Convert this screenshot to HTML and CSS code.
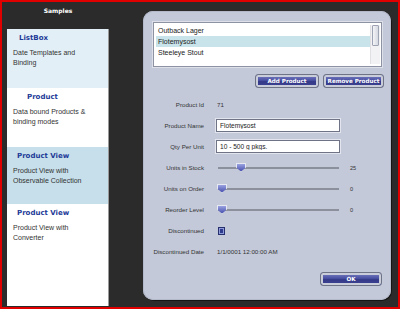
FILE: index.html
```html
<!DOCTYPE html>
<html lang="en">
<head>
    <meta charset="UTF-8">
    <title>Samples</title>
    <link rel="stylesheet" href="styles.css">
</head>
<body>
    <div class="frame">
        <div class="side">
            <div class="side-title">Samples</div>
            <div class="sample-list">
                <div class="sample sample-tinted">
                    <div class="sample-name name-listbox">ListBox</div>
                    <div class="sample-desc">Date Templates and Binding</div>
                </div>
                <div class="sample">
                    <div class="sample-name name-product">Product</div>
                    <div class="sample-desc">Data bound Products &amp; binding modes</div>
                </div>
                <div class="sample sample-selected">
                    <div class="sample-name">Product View</div>
                    <div class="sample-desc">Product View with Observable Collection</div>
                </div>
                <div class="sample sample-last">
                    <div class="sample-name">Product View</div>
                    <div class="sample-desc">Product View with Converter</div>
                </div>
            </div>
        </div>

        <div class="panel">
            <div class="listbox">
                <div class="list-items">
                    <div class="list-item">Outback Lager</div>
                    <div class="list-item selected">Flotemysost</div>
                    <div class="list-item">Steeleye Stout</div>
                </div>
                <div class="scrollbar"><div class="scroll-thumb"></div></div>
            </div>

            <div class="actions">
                <button class="btn btn-add">Add Product</button>
                <button class="btn btn-remove">Remove Product</button>
            </div>

            <div class="form">
                <div class="label">Product Id</div>
                <div class="value">71</div>

                <div class="label">Product Name</div>
                <div class="value"><input class="field" type="text" value="Flotemysost"></div>

                <div class="label">Qty Per Unit</div>
                <div class="value"><input class="field" type="text" value="10 - 500 g pkgs."></div>

                <div class="label">Units in Stock</div>
                <div class="value slider-row">
                    <div class="track"><span class="thumb" style="left: 18px"></span></div>
                    <span class="slider-value">25</span>
                </div>

                <div class="label">Units on Order</div>
                <div class="value slider-row">
                    <div class="track"><span class="thumb" style="left: -1px"></span></div>
                    <span class="slider-value">0</span>
                </div>

                <div class="label">Reorder Level</div>
                <div class="value slider-row">
                    <div class="track"><span class="thumb" style="left: -1px"></span></div>
                    <span class="slider-value">0</span>
                </div>

                <div class="label">Discontinued</div>
                <div class="value"><span class="check"></span></div>

                <div class="label">Discontinued Date</div>
                <div class="value">1/1/0001 12:00:00 AM</div>
            </div>

            <div class="footer">
                <button class="btn btn-ok">OK</button>
            </div>
        </div>
    </div>
</body>
</html>
```

FILE: styles.css
```css
* {
    box-sizing: border-box;
    margin: 0;
    padding: 0;
}

body {
    background: #2b2b2b;
    font-family: 'Liberation Sans', Arial, sans-serif;
    color: #333;
}

.frame {
    width: 400px;
    height: 309px;
    border: 2px solid #e00000;
    background: #2b2b2b;
    display: flex;
    padding-left: 5px;
}

/* sidebar */
.side {
    width: 102px;
    display: flex;
    flex-direction: column;
}

.side-title {
    height: 27px;
    line-height: 17px;
    text-align: center;
    color: #fff;
    font-family: 'DejaVu Sans', Verdana, sans-serif;
    font-weight: bold;
    font-size: 6px;
}

.sample-list {
    flex: 1;
    background: #fff;
    border-right: 1px solid #9a9a9a;
    margin-bottom: 1px;
    display: flex;
    flex-direction: column;
}

.sample {
    height: 59px;
    padding: 5px 6px 0;
}

.sample-tinted {
    background: #e3eff6;
}

.sample-selected {
    height: 57px;
    background: #c6dfea;
}

.sample-last {
    flex: 1;
}

.sample-name {
    font-family: 'DejaVu Sans', Verdana, sans-serif;
    font-weight: bold;
    font-size: 7px;
    color: #1d3a98;
    height: 14px;
    line-height: 9px;
    padding-left: 4px;
}

.name-listbox {
    padding-left: 6px;
}

.name-product {
    padding-left: 14px;
}

.sample-desc {
    max-width: 82px;
    font-size: 7px;
    line-height: 9.5px;
    color: #333;
}

/* main panel */
.panel {
    width: 248px;
    height: 289px;
    margin: 9px 0 0 34px;
    background: #c3c9d9;
    border-radius: 10px;
    box-shadow: 1px 1px 0 #151515, inset 0 0 0 1px #b3b9c9;
    padding: 11px 7px 0 10px;
    display: flex;
    flex-direction: column;
}

.listbox {
    width: 229px;
    height: 45px;
    background: #fff;
    border: 1px solid #8e93a3;
    box-shadow: 0 0 0 1px #dde0e8;
    display: flex;
    padding: 2px 1px 2px 2px;
}

.list-items {
    flex: 1;
}

.list-item {
    height: 11px;
    line-height: 12px;
    font-size: 7px;
    padding-left: 2px;
    color: #222;
}

.list-item.selected {
    background: #c8e4ea;
}

.scrollbar {
    width: 10px;
    background: #f2f2f4;
    border-left: 1px solid #e0e0e4;
}

.scroll-thumb {
    height: 21px;
    margin: 0 1px;
    background: linear-gradient(90deg, #f4f4f7, #d7d9e2);
    border: 1px solid #9ea3b4;
    border-radius: 1px;
}

.actions {
    display: flex;
    justify-content: flex-end;
    gap: 4px;
    margin-top: 7px;
}

.btn {
    height: 14px;
    border: 1px solid #6e7386;
    border-radius: 3px;
    background: linear-gradient(#7a80c4, #4a50a2 45%, #343a88 55%, #3e4494);
    box-shadow: inset 0 0 0 2px #c9cdda;
    color: #fff;
    font-family: 'DejaVu Sans', Verdana, sans-serif;
    font-weight: bold;
    font-size: 5.6px;
    line-height: 12px;
}

.btn-add {
    width: 64px;
}

.btn-remove {
    width: 61px;
}

.btn-ok {
    width: 62px;
}

/* details form */
.form {
    display: grid;
    grid-template-columns: 51px 1fr;
    grid-auto-rows: 21px;
    column-gap: 13px;
    margin-top: 6px;
    font-size: 6.2px;
    color: #333;
}

.label {
    text-align: right;
    align-self: center;
}

.value {
    align-self: center;
    display: flex;
    align-items: center;
}

.field {
    width: 124px;
    height: 13px;
    margin-left: -1px;
    border: 1px solid #6e7386;
    box-shadow: 0 0 0 1px #e2e5ee;
    background: #fff;
    font-family: 'Liberation Sans', Arial, sans-serif;
    font-size: 6.6px;
    color: #222;
    padding: 0 3px;
}

.slider-row {
    gap: 11px;
}

.track {
    position: relative;
    width: 121px;
    height: 2px;
    margin-left: 1px;
    background: #8b909c;
}

.thumb {
    position: absolute;
    top: -4px;
    width: 10px;
    height: 9px;
    background: linear-gradient(#9aa2e0, #4a53b0);
    border: 1px solid #e6e8f2;
    clip-path: polygon(0 0, 100% 0, 100% 55%, 50% 100%, 0 55%);
}

.slider-value {
    font-size: 5.6px;
}

.check {
    width: 7px;
    height: 8px;
    margin-left: 1px;
    background: #2e3a8e;
    border: 1px solid #26306e;
    box-shadow: inset 0 0 0 1px #8f9ad8;
}

.footer {
    display: flex;
    justify-content: flex-end;
    margin-top: 10px;
    padding-right: 2px;
}
```
